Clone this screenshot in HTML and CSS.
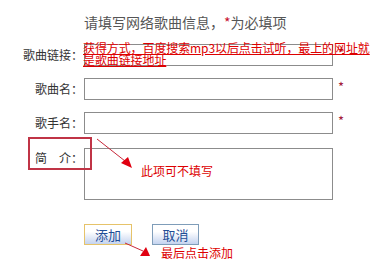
FILE: index.html
```html
<!DOCTYPE html>
<html lang="zh-CN">
<head>
<meta charset="utf-8">
<title>歌曲信息</title>
<link rel="stylesheet" href="styles.css">
</head>
<body>
<div class="page">
  <h1 class="title">请填写网络歌曲信息，<span class="star">*</span>为必填项</h1>
  <form class="form">
    <label class="label">歌曲链接：</label>
    <input class="field" type="text">
    <span class="req">*</span>

    <label class="label">歌曲名：</label>
    <input class="field" type="text">
    <span class="req">*</span>

    <label class="label">歌手名：</label>
    <input class="field" type="text">
    <span class="req">*</span>

    <label class="label label-top">简　介：</label>
    <textarea class="area"></textarea>
    <span></span>

    <span></span>
    <div class="buttons">
      <button type="button" class="btn btn-focus">添加</button>
      <button type="button" class="btn">取消</button>
    </div>
  </form>

  <div class="note note-link">获得方式，百度搜索mp3以后点击试听，最上的网址就<br>是歌曲链接地址</div>
  <div class="mark-box"></div>
  <div class="note note-optional">此项可不填写</div>
  <div class="note note-add">最后点击添加</div>
  <svg class="arrows" width="371" height="272" viewBox="0 0 371 272">
    <line x1="97" y1="139" x2="125" y2="161" stroke="#c8283a" stroke-width="1"/>
    <polygon points="121,163 128,157 132,168" fill="#e00010"/>
    <line x1="125" y1="243" x2="143" y2="251" stroke="#c8283a" stroke-width="1"/>
    <polygon points="140,256 150,256 146,247" fill="#e00010"/>
  </svg>
</div>
</body>
</html>
```
FILE: styles.css
```css
* { box-sizing: border-box; }

html, body {
  margin: 0;
  padding: 0;
  background: #fff;
}

body {
  font-family: "Noto Sans CJK SC", "Noto Sans", sans-serif;
  color: #333;
}

.page {
  position: relative;
  width: 371px;
  height: 272px;
  overflow: hidden;
}

.title {
  margin: 0;
  padding: 12px 0 0 84px;
  height: 32px;
  font-size: 14px;
  line-height: 20px;
  font-weight: normal;
  color: #555;
}

.star {
  color: #c8102e;
}

.form {
  margin-top: 12px;
  display: grid;
  grid-template-columns: 83px 249px auto;
  column-gap: 1px;
  row-gap: 12px;
}

.label {
  align-self: center;
  text-align: right;
  font-size: 12px;
  line-height: 16px;
  color: #333;
  white-space: nowrap;
}

.label-top {
  align-self: start;
  margin-top: 2px;
  padding-top: 2px;
  line-height: 16px;
}

.field {
  width: 249px;
  height: 22px;
  margin: 0;
  border: 1px solid #8c8c8c;
  padding: 0 3px;
  font: inherit;
  background: #fff;
}

.area {
  width: 249px;
  height: 52px;
  margin: 2px 0 0;
  border: 1px solid #8c8c8c;
  resize: none;
  font: inherit;
  background: #fff;
  display: block;
}

.req {
  align-self: start;
  padding-left: 4px;
  padding-top: 2px;
  font-size: 13px;
  line-height: 14px;
  color: #a3173a;
}

.buttons {
  margin-top: 12px;
  display: flex;
  gap: 20px;
}

.btn {
  width: 48px;
  height: 21px;
  margin: 0;
  padding: 0;
  border: 1px solid #7f9db9;
  background: linear-gradient(#ffffff 0%, #ffffff 35%, #c4d3ef 100%);
  color: #1f4e96;
  font-family: inherit;
  font-size: 13px;
  line-height: 18px;
}

.btn-focus {
  border-color: #e6c36a;
}

.btn + .btn {
  width: 47px;
}

.note {
  position: absolute;
  font-size: 12px;
  line-height: 12px;
  color: #dd0000;
  white-space: nowrap;
}

.note-link {
  left: 83px;
  top: 42px;
  text-decoration: underline;
  letter-spacing: -0.1px;
}

.note-optional {
  left: 141px;
  top: 164px;
  line-height: 14px;
}

.note-add {
  left: 161px;
  top: 246px;
  line-height: 14px;
}

.mark-box {
  position: absolute;
  left: 28px;
  top: 137px;
  width: 64px;
  height: 33px;
  border: 2px solid #c03446;
}

.arrows {
  position: absolute;
  left: 0;
  top: 0;
  pointer-events: none;
}
```
